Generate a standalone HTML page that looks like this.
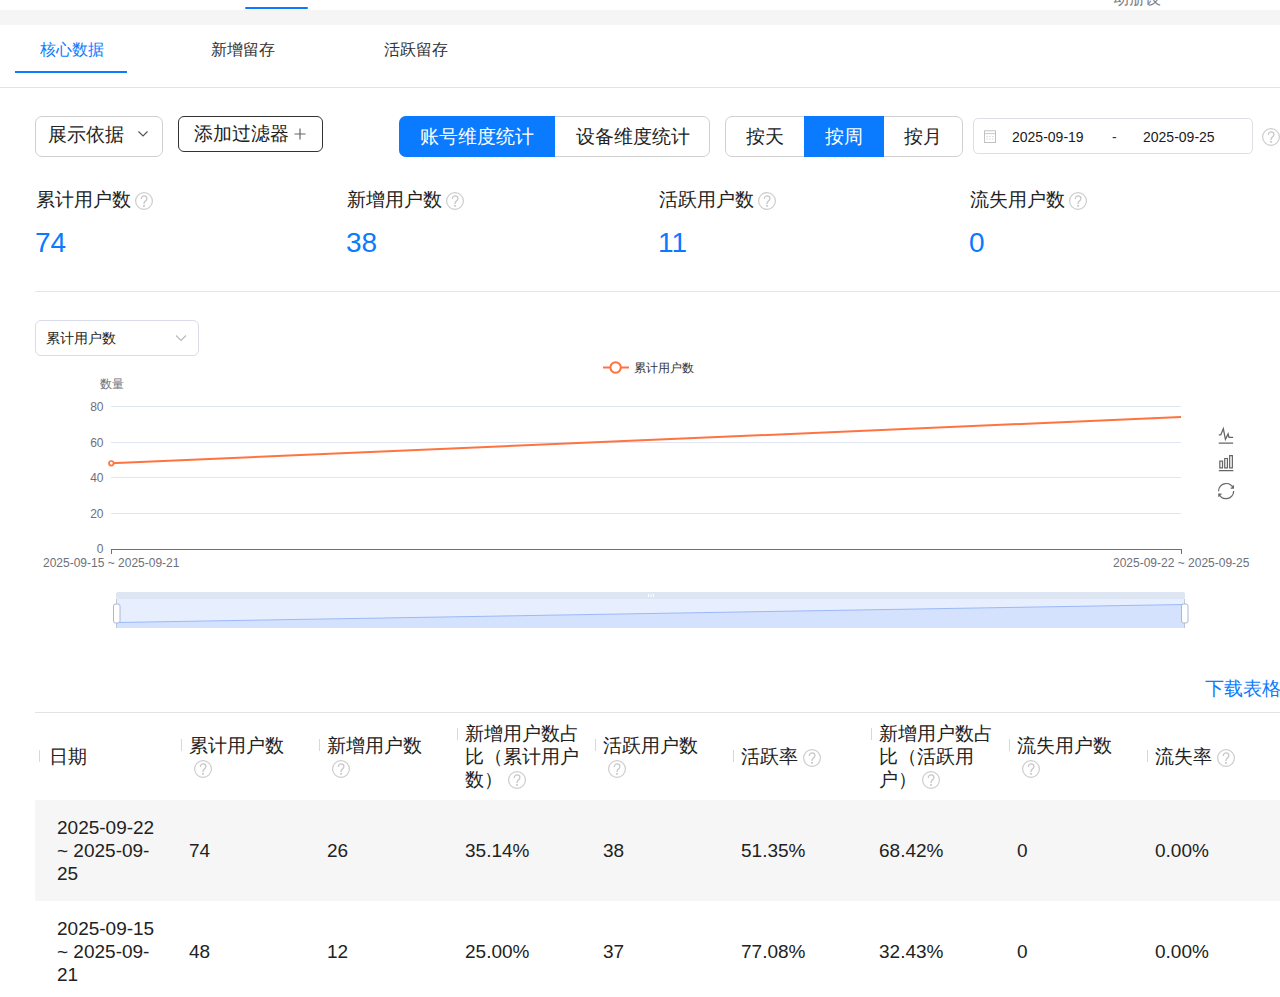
<!DOCTYPE html>
<html><head><meta charset="utf-8">
<style>
*{box-sizing:border-box;margin:0;padding:0}
html,body{width:1280px;height:997px;overflow:hidden;background:#fff}
body{position:relative;font-family:"Liberation Sans",sans-serif;color:#222}
.a{position:absolute;white-space:nowrap}
.blue{color:#0a7aff}
.help{position:absolute;width:18px;height:18px}
.sep{position:absolute;width:1px;height:12px;background:#d8d8d8}
.hd{position:absolute;font-size:19px;line-height:23px;color:#222;white-space:nowrap}
.cell{position:absolute;font-size:19px;line-height:23px;color:#222;white-space:nowrap}
</style></head><body>

<!-- top header strip -->
<div class="a" style="left:245px;top:7px;width:63px;height:2px;background:#0a7aff;border-radius:1px"></div>
<div class="a" style="left:1113px;top:-10px;font-size:16px;line-height:18px;color:#808080;height:19px;overflow:hidden">动册设</div>
<div class="a" style="left:0;top:10px;width:1280px;height:15px;background:#f5f5f5"></div>

<!-- tabs -->
<div class="a blue" style="left:40px;top:39px;font-size:16px;line-height:22px">核心数据</div>
<div class="a" style="left:211px;top:39px;font-size:16px;line-height:22px;color:#333">新增留存</div>
<div class="a" style="left:384px;top:39px;font-size:16px;line-height:22px;color:#333">活跃留存</div>
<div class="a" style="left:15px;top:71px;width:112px;height:2px;background:#0a7aff"></div>
<div class="a" style="left:0;top:87px;width:1280px;height:1px;background:#e3e3e3"></div>

<!-- controls -->
<div class="a" style="left:35px;top:116px;width:128px;height:41px;border:1px solid #cfcfcf;border-radius:7px"></div>
<div class="a" style="left:48px;top:123px;font-size:19px;line-height:24px;color:#222">展示依据</div>
<svg class="a" style="left:137px;top:130px" width="12" height="8" viewBox="0 0 12 8"><path d="M1.5 1.5 L6 6 L10.5 1.5" fill="none" stroke="#555" stroke-width="1.2"/></svg>

<div class="a" style="left:178px;top:116px;width:145px;height:36px;border:1px solid #333;border-radius:6px"></div>
<div class="a" style="left:194px;top:122px;font-size:19px;line-height:24px;color:#222">添加过滤器</div>
<svg class="a" style="left:294px;top:128px" width="12" height="12" viewBox="0 0 12 12"><path d="M6 0.5 V11.5 M0.5 6 H11.5" fill="none" stroke="#666" stroke-width="1.2"/></svg>

<div class="a" style="left:399px;top:116px;width:311px;height:41px;border:1px solid #d0d0d0;border-radius:7px"></div>
<div class="a" style="left:399px;top:116px;width:156px;height:41px;background:#0a7aff;border-radius:7px 0 0 7px"></div>
<div class="a" style="left:420px;top:125px;font-size:19px;line-height:24px;color:#fff">账号维度统计</div>
<div class="a" style="left:576px;top:125px;font-size:19px;line-height:24px;color:#222">设备维度统计</div>

<div class="a" style="left:725px;top:116px;width:238px;height:41px;border:1px solid #d0d0d0;border-radius:7px"></div>
<div class="a" style="left:804px;top:116px;width:80px;height:41px;background:#0a7aff"></div>
<div class="a" style="left:746px;top:125px;font-size:19px;line-height:24px;color:#222">按天</div>
<div class="a" style="left:825px;top:125px;font-size:19px;line-height:24px;color:#fff">按周</div>
<div class="a" style="left:904px;top:125px;font-size:19px;line-height:24px;color:#222">按月</div>

<div class="a" style="left:973px;top:118px;width:280px;height:36px;border:1px solid #dcdfe6;border-radius:5px"></div>
<svg class="a" style="left:984px;top:130px" width="12" height="13" viewBox="0 0 12 13"><rect x="0.5" y="0.8" width="11" height="11.7" fill="none" stroke="#c2c2c2" stroke-width="1"/><path d="M0.5 3.6 H11.5" stroke="#c8c8c8" stroke-width="1"/><path d="M2.5 6.5h1.2M5.4 6.5h1.2M8.3 6.5h1.2M2.5 9h1.2M5.4 9h1.2M8.3 9h1.2" stroke="#d0d0d0" stroke-width="1.2"/></svg>
<div class="a" style="left:1012px;top:129px;font-size:14px;line-height:17px;color:#1a1a1a">2025-09-19</div>
<div class="a" style="left:1112px;top:129px;font-size:14px;line-height:17px;color:#333">-</div>
<div class="a" style="left:1143px;top:129px;font-size:14px;line-height:17px;color:#1a1a1a">2025-09-25</div>
<div class="help" style="left:1262px;top:128px"><svg width="18" height="18" viewBox="0 0 18 18" style="display:block"><circle cx="9" cy="9" r="8.4" fill="none" stroke="#cdcdcd" stroke-width="1.2"/><path d="M6.3 6.9 C6.3 4.9 7.6 3.8 9.1 3.8 C10.8 3.8 11.9 5 11.9 6.4 C11.9 7.8 10.9 8.6 10.1 9.3 C9.3 10 9 10.6 9 11.9" fill="none" stroke="#c8c8c8" stroke-width="1.3"/><rect x="8.1" y="12.9" width="1.8" height="1.8" fill="#c8c8c8"/></svg></div>

<!-- stats -->
<div class="a" style="left:36px;top:188px;font-size:19px;line-height:24px;color:#222">累计用户数</div>
<div class="help" style="left:135px;top:192px"><svg width="18" height="18" viewBox="0 0 18 18" style="display:block"><circle cx="9" cy="9" r="8.4" fill="none" stroke="#cdcdcd" stroke-width="1.2"/><path d="M6.3 6.9 C6.3 4.9 7.6 3.8 9.1 3.8 C10.8 3.8 11.9 5 11.9 6.4 C11.9 7.8 10.9 8.6 10.1 9.3 C9.3 10 9 10.6 9 11.9" fill="none" stroke="#c8c8c8" stroke-width="1.3"/><rect x="8.1" y="12.9" width="1.8" height="1.8" fill="#c8c8c8"/></svg></div>
<div class="a blue" style="left:35px;top:227px;font-size:28px;line-height:32px">74</div>

<div class="a" style="left:347px;top:188px;font-size:19px;line-height:24px;color:#222">新增用户数</div>
<div class="help" style="left:446px;top:192px"><svg width="18" height="18" viewBox="0 0 18 18" style="display:block"><circle cx="9" cy="9" r="8.4" fill="none" stroke="#cdcdcd" stroke-width="1.2"/><path d="M6.3 6.9 C6.3 4.9 7.6 3.8 9.1 3.8 C10.8 3.8 11.9 5 11.9 6.4 C11.9 7.8 10.9 8.6 10.1 9.3 C9.3 10 9 10.6 9 11.9" fill="none" stroke="#c8c8c8" stroke-width="1.3"/><rect x="8.1" y="12.9" width="1.8" height="1.8" fill="#c8c8c8"/></svg></div>
<div class="a blue" style="left:346px;top:227px;font-size:28px;line-height:32px">38</div>

<div class="a" style="left:659px;top:188px;font-size:19px;line-height:24px;color:#222">活跃用户数</div>
<div class="help" style="left:758px;top:192px"><svg width="18" height="18" viewBox="0 0 18 18" style="display:block"><circle cx="9" cy="9" r="8.4" fill="none" stroke="#cdcdcd" stroke-width="1.2"/><path d="M6.3 6.9 C6.3 4.9 7.6 3.8 9.1 3.8 C10.8 3.8 11.9 5 11.9 6.4 C11.9 7.8 10.9 8.6 10.1 9.3 C9.3 10 9 10.6 9 11.9" fill="none" stroke="#c8c8c8" stroke-width="1.3"/><rect x="8.1" y="12.9" width="1.8" height="1.8" fill="#c8c8c8"/></svg></div>
<div class="a blue" style="left:658px;top:227px;font-size:28px;line-height:32px">11</div>

<div class="a" style="left:970px;top:188px;font-size:19px;line-height:24px;color:#222">流失用户数</div>
<div class="help" style="left:1069px;top:192px"><svg width="18" height="18" viewBox="0 0 18 18" style="display:block"><circle cx="9" cy="9" r="8.4" fill="none" stroke="#cdcdcd" stroke-width="1.2"/><path d="M6.3 6.9 C6.3 4.9 7.6 3.8 9.1 3.8 C10.8 3.8 11.9 5 11.9 6.4 C11.9 7.8 10.9 8.6 10.1 9.3 C9.3 10 9 10.6 9 11.9" fill="none" stroke="#c8c8c8" stroke-width="1.3"/><rect x="8.1" y="12.9" width="1.8" height="1.8" fill="#c8c8c8"/></svg></div>
<div class="a blue" style="left:969px;top:227px;font-size:28px;line-height:32px">0</div>

<div class="a" style="left:35px;top:291px;width:1245px;height:1px;background:#e6e6e6"></div>


<!-- chart select -->
<div class="a" style="left:35px;top:320px;width:164px;height:36px;border:1px solid #d9dce8;border-radius:6px"></div>
<div class="a" style="left:46px;top:329px;font-size:14px;line-height:18px;color:#222">累计用户数</div>
<svg class="a" style="left:175px;top:334px" width="12" height="8" viewBox="0 0 12 8"><path d="M1 1.5 L6 6.5 L11 1.5" fill="none" stroke="#b8b8b8" stroke-width="1.1"/></svg>

<!-- legend -->
<svg class="a" style="left:600px;top:357.8px" width="32" height="20" viewBox="0 0 32 20"><path d="M3 9.5 H29" stroke="#ff7340" stroke-width="2"/><circle cx="15.6" cy="9.5" r="5.2" fill="#fff" stroke="#ff7340" stroke-width="2"/></svg>
<div class="a" style="left:634px;top:361px;font-size:12px;line-height:15px;color:#333">累计用户数</div>

<!-- y axis name / labels -->
<div class="a" style="left:100px;top:377px;font-size:12px;line-height:15px;color:#6e7079">数量</div>
<div class="a" style="left:87.5px;top:400px;width:16px;text-align:right;font-size:12px;line-height:14px;color:#6e7079">80</div>
<div class="a" style="left:87.5px;top:436px;width:16px;text-align:right;font-size:12px;line-height:14px;color:#6e7079">60</div>
<div class="a" style="left:87.5px;top:471px;width:16px;text-align:right;font-size:12px;line-height:14px;color:#6e7079">40</div>
<div class="a" style="left:87.5px;top:507px;width:16px;text-align:right;font-size:12px;line-height:14px;color:#6e7079">20</div>
<div class="a" style="left:87.5px;top:542px;width:16px;text-align:right;font-size:12px;line-height:14px;color:#6e7079">0</div>
<svg class="a" style="left:0;top:0" width="1280" height="997" viewBox="0 0 1280 997">
  <g stroke="#e0e6f1" stroke-width="1">
    <path d="M111 406.5 H1181 M111 442.5 H1181 M111 477.5 H1181 M111 513.5 H1181"/>
  </g>
  <path d="M111 549.5 H1181.5 M111.5 549 V554 M1181.5 549 V554" stroke="#6e7079" stroke-width="1" fill="none"/>
  <path d="M111 463.3 L1181 417" stroke="#ff7340" stroke-width="2" fill="none"/>
  <circle cx="111.3" cy="463.3" r="2.3" fill="#fff" stroke="#ff7340" stroke-width="1.7"/>
  <!-- slider -->
  <rect x="116" y="592" width="1069" height="7" rx="1.5" fill="#d2dbee" fill-opacity="0.7"/>
  <rect x="116" y="599" width="1069" height="29" fill="#87afff" fill-opacity="0.2"/>
  <path d="M116 622.5 L1185 604.5 L1185 628 L116 628 Z" fill="#8fb0f7" fill-opacity="0.2"/>
  <path d="M116 622.5 L1185 604.5" stroke="#8fb0f7" stroke-opacity="0.85" stroke-width="1" fill="none"/>
  <path d="M116.5 599 V628 M1184.5 599 V628" stroke="#acb8d1" stroke-opacity="0.7" stroke-width="1"/>
  <rect x="113.5" y="604" width="6.5" height="19" rx="2" fill="#fff" stroke="#acb8d1" stroke-width="1"/>
  <rect x="1181.5" y="604" width="6.5" height="19" rx="2" fill="#fff" stroke="#acb8d1" stroke-width="1"/>
  <path d="M648.5 594 V597 M651 594 V597 M653.5 594 V597" stroke="#fff" stroke-width="1"/>
  <!-- toolbox -->
  <g transform="translate(1217.6,426.8) scale(0.28)" fill="none" stroke="#666" stroke-width="4.5">
    <path d="M4.1,28.9h7.1l9.3-22l7.4,38l9.7-19.7l3,12.8h14.9M4.1,58h51.4"/>
  </g>
  <g transform="translate(1218,455) scale(0.27)" fill="none" stroke="#666" stroke-width="4.5">
    <path d="M6.7,22.9h10V48h-10V22.9zM24.9,13h10v35h-10V13zM43.2,2h10v46h-10V2zM3.1,58h53.7"/>
  </g>
  <g transform="translate(1218,483) scale(0.27)" fill="none" stroke="#666" stroke-width="4.5">
    <path d="M3.8,33.4 M47,18.9h9.8V8.7 M56.3,20.1 C52.1,9,40.5,0.6,26.8,2.1C12.6,3.7,1.6,16.2,2.1,30.6 M13,41.1H3.1v10.2 M3.7,39.9c4.2,11.1,15.8,19.5,29.5,18 c14.2-1.6,25.2-14.1,24.7-28.5"/>
  </g>
</svg>
<div class="a" style="left:43px;top:556px;font-size:12px;line-height:14px;color:#6e7079">2025-09-15 ~ 2025-09-21</div>
<div class="a" style="left:1113px;top:556px;font-size:12px;line-height:14px;color:#6e7079">2025-09-22 ~ 2025-09-25</div>

<!-- download -->
<div class="a blue" style="left:1205px;top:677px;font-size:19px;line-height:24px">下载表格</div>
<div class="a" style="left:35px;top:712px;width:1245px;height:1px;background:#e3e3e3"></div>

<!-- table header -->
<div class="sep" style="left:39px;top:750px"></div>
<div class="hd" style="left:49px;top:745px">日期</div>
<div class="sep" style="left:181px;top:739px"></div>
<div class="hd" style="left:189px;top:734px">累计用户数</div>
<div class="help" style="left:194px;top:760px"><svg width="18" height="18" viewBox="0 0 18 18" style="display:block"><circle cx="9" cy="9" r="8.4" fill="none" stroke="#cdcdcd" stroke-width="1.2"/><path d="M6.3 6.9 C6.3 4.9 7.6 3.8 9.1 3.8 C10.8 3.8 11.9 5 11.9 6.4 C11.9 7.8 10.9 8.6 10.1 9.3 C9.3 10 9 10.6 9 11.9" fill="none" stroke="#c8c8c8" stroke-width="1.3"/><rect x="8.1" y="12.9" width="1.8" height="1.8" fill="#c8c8c8"/></svg></div>
<div class="sep" style="left:319px;top:739px"></div>
<div class="hd" style="left:327px;top:734px">新增用户数</div>
<div class="help" style="left:332px;top:760px"><svg width="18" height="18" viewBox="0 0 18 18" style="display:block"><circle cx="9" cy="9" r="8.4" fill="none" stroke="#cdcdcd" stroke-width="1.2"/><path d="M6.3 6.9 C6.3 4.9 7.6 3.8 9.1 3.8 C10.8 3.8 11.9 5 11.9 6.4 C11.9 7.8 10.9 8.6 10.1 9.3 C9.3 10 9 10.6 9 11.9" fill="none" stroke="#c8c8c8" stroke-width="1.3"/><rect x="8.1" y="12.9" width="1.8" height="1.8" fill="#c8c8c8"/></svg></div>
<div class="sep" style="left:457px;top:728px"></div>
<div class="hd" style="left:465px;top:722px">新增用户数占<br>比（累计用户<br>数）</div>
<div class="help" style="left:508px;top:771px"><svg width="18" height="18" viewBox="0 0 18 18" style="display:block"><circle cx="9" cy="9" r="8.4" fill="none" stroke="#cdcdcd" stroke-width="1.2"/><path d="M6.3 6.9 C6.3 4.9 7.6 3.8 9.1 3.8 C10.8 3.8 11.9 5 11.9 6.4 C11.9 7.8 10.9 8.6 10.1 9.3 C9.3 10 9 10.6 9 11.9" fill="none" stroke="#c8c8c8" stroke-width="1.3"/><rect x="8.1" y="12.9" width="1.8" height="1.8" fill="#c8c8c8"/></svg></div>
<div class="sep" style="left:595px;top:739px"></div>
<div class="hd" style="left:603px;top:734px">活跃用户数</div>
<div class="help" style="left:608px;top:760px"><svg width="18" height="18" viewBox="0 0 18 18" style="display:block"><circle cx="9" cy="9" r="8.4" fill="none" stroke="#cdcdcd" stroke-width="1.2"/><path d="M6.3 6.9 C6.3 4.9 7.6 3.8 9.1 3.8 C10.8 3.8 11.9 5 11.9 6.4 C11.9 7.8 10.9 8.6 10.1 9.3 C9.3 10 9 10.6 9 11.9" fill="none" stroke="#c8c8c8" stroke-width="1.3"/><rect x="8.1" y="12.9" width="1.8" height="1.8" fill="#c8c8c8"/></svg></div>
<div class="sep" style="left:733px;top:750px"></div>
<div class="hd" style="left:741px;top:745px">活跃率</div>
<div class="help" style="left:803px;top:749px"><svg width="18" height="18" viewBox="0 0 18 18" style="display:block"><circle cx="9" cy="9" r="8.4" fill="none" stroke="#cdcdcd" stroke-width="1.2"/><path d="M6.3 6.9 C6.3 4.9 7.6 3.8 9.1 3.8 C10.8 3.8 11.9 5 11.9 6.4 C11.9 7.8 10.9 8.6 10.1 9.3 C9.3 10 9 10.6 9 11.9" fill="none" stroke="#c8c8c8" stroke-width="1.3"/><rect x="8.1" y="12.9" width="1.8" height="1.8" fill="#c8c8c8"/></svg></div>
<div class="sep" style="left:871px;top:728px"></div>
<div class="hd" style="left:879px;top:722px">新增用户数占<br>比（活跃用<br>户）</div>
<div class="help" style="left:922px;top:771px"><svg width="18" height="18" viewBox="0 0 18 18" style="display:block"><circle cx="9" cy="9" r="8.4" fill="none" stroke="#cdcdcd" stroke-width="1.2"/><path d="M6.3 6.9 C6.3 4.9 7.6 3.8 9.1 3.8 C10.8 3.8 11.9 5 11.9 6.4 C11.9 7.8 10.9 8.6 10.1 9.3 C9.3 10 9 10.6 9 11.9" fill="none" stroke="#c8c8c8" stroke-width="1.3"/><rect x="8.1" y="12.9" width="1.8" height="1.8" fill="#c8c8c8"/></svg></div>
<div class="sep" style="left:1009px;top:739px"></div>
<div class="hd" style="left:1017px;top:734px">流失用户数</div>
<div class="help" style="left:1022px;top:760px"><svg width="18" height="18" viewBox="0 0 18 18" style="display:block"><circle cx="9" cy="9" r="8.4" fill="none" stroke="#cdcdcd" stroke-width="1.2"/><path d="M6.3 6.9 C6.3 4.9 7.6 3.8 9.1 3.8 C10.8 3.8 11.9 5 11.9 6.4 C11.9 7.8 10.9 8.6 10.1 9.3 C9.3 10 9 10.6 9 11.9" fill="none" stroke="#c8c8c8" stroke-width="1.3"/><rect x="8.1" y="12.9" width="1.8" height="1.8" fill="#c8c8c8"/></svg></div>
<div class="sep" style="left:1147px;top:750px"></div>
<div class="hd" style="left:1155px;top:745px">流失率</div>
<div class="help" style="left:1217px;top:749px"><svg width="18" height="18" viewBox="0 0 18 18" style="display:block"><circle cx="9" cy="9" r="8.4" fill="none" stroke="#cdcdcd" stroke-width="1.2"/><path d="M6.3 6.9 C6.3 4.9 7.6 3.8 9.1 3.8 C10.8 3.8 11.9 5 11.9 6.4 C11.9 7.8 10.9 8.6 10.1 9.3 C9.3 10 9 10.6 9 11.9" fill="none" stroke="#c8c8c8" stroke-width="1.3"/><rect x="8.1" y="12.9" width="1.8" height="1.8" fill="#c8c8c8"/></svg></div>

<!-- rows -->
<div class="a" style="left:35px;top:800px;width:1245px;height:101px;background:#f6f6f6"></div>
<div class="cell" style="left:57px;top:816px">2025-09-22<br>~ 2025-09-<br>25</div>
<div class="cell" style="left:189px;top:839px">74</div>
<div class="cell" style="left:327px;top:839px">26</div>
<div class="cell" style="left:465px;top:839px">35.14%</div>
<div class="cell" style="left:603px;top:839px">38</div>
<div class="cell" style="left:741px;top:839px">51.35%</div>
<div class="cell" style="left:879px;top:839px">68.42%</div>
<div class="cell" style="left:1017px;top:839px">0</div>
<div class="cell" style="left:1155px;top:839px">0.00%</div>

<div class="cell" style="left:57px;top:917px">2025-09-15<br>~ 2025-09-<br>21</div>
<div class="cell" style="left:189px;top:940px">48</div>
<div class="cell" style="left:327px;top:940px">12</div>
<div class="cell" style="left:465px;top:940px">25.00%</div>
<div class="cell" style="left:603px;top:940px">37</div>
<div class="cell" style="left:741px;top:940px">77.08%</div>
<div class="cell" style="left:879px;top:940px">32.43%</div>
<div class="cell" style="left:1017px;top:940px">0</div>
<div class="cell" style="left:1155px;top:940px">0.00%</div>

</body></html>
